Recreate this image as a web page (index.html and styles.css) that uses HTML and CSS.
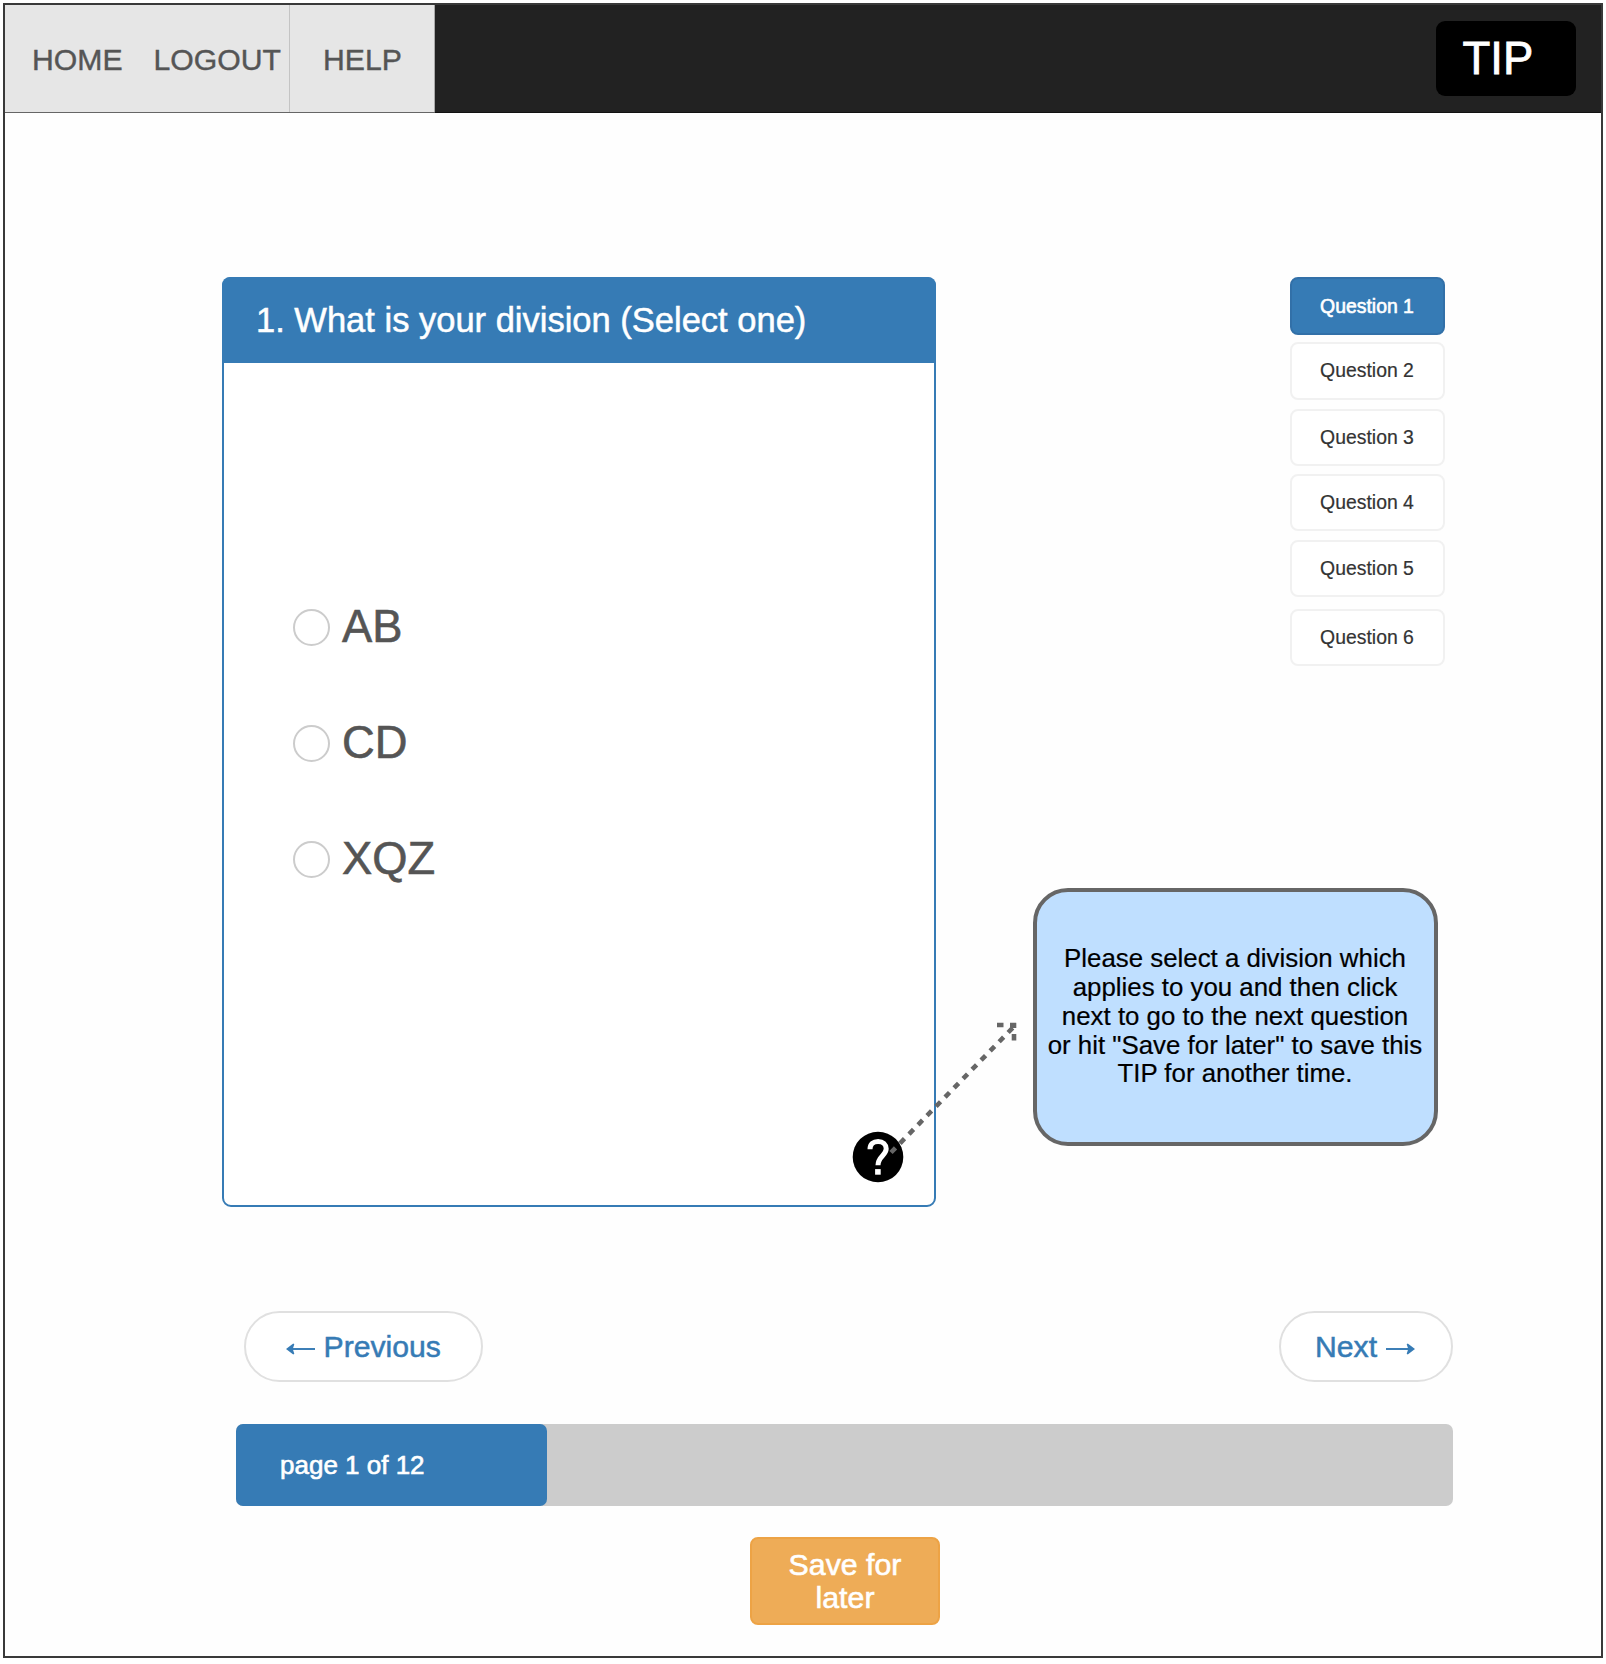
FILE: index.html
```
<!DOCTYPE html>
<html lang="en">
<head>
<meta charset="utf-8">
<title>TIP</title>
<link rel="stylesheet" href="styles.css">
</head>
<body>
<div class="frame">
  <header class="topbar">
    <nav class="tabs">
      <a class="tab tab-home">HOME</a>
      <a class="tab tab-logout">LOGOUT</a>
      <a class="tab tab-help">HELP</a>
    </nav>
    <div class="brand">TIP</div>
  </header>

  <main class="content">
    <div class="columns">
      <section class="panel">
        <h1 class="panel-title">1. What is your division (Select one)</h1>
        <div class="options">
          <label class="option"><span class="radio"></span><span class="option-text">AB</span></label>
          <label class="option"><span class="radio"></span><span class="option-text">CD</span></label>
          <label class="option"><span class="radio"></span><span class="option-text">XQZ</span></label>
        </div>
        <svg class="help" viewBox="0 0 52 52">
          <circle cx="26" cy="26" r="25.3" fill="#000"/>
          <path d="M18 18.3 C18 13.2 21.4 10.4 26.1 10.4 C31 10.4 34.2 13.6 34.2 17.8 C34.2 24.4 26 25.4 26 34.2" fill="none" stroke="#fff" stroke-width="5"/>
          <rect x="23.1" y="38.1" width="5.6" height="5.6" fill="#fff"/>
        </svg>
        <svg class="pointer" viewBox="0 0 140 140">
          <g fill="none" stroke="#666" stroke-width="4.6">
            <path d="M11 132.5 L135 5.5" stroke-dasharray="6.45 6.45"/>
            <path d="M117 5 H123.5 M130 5 H136.2 M134 3 V8 M134 14 V20.5"/>
          </g>
        </svg>
      </section>

      <aside class="side">
        <div class="questions">
          <a class="question active">Question 1</a>
          <a class="question">Question 2</a>
          <a class="question">Question 3</a>
          <a class="question">Question 4</a>
          <a class="question">Question 5</a>
          <a class="question">Question 6</a>
        </div>
        <div class="hint">
          <p class="hint-text">Please select a division which<br>applies to you and then click<br>next to go to the next question<br>or hit "Save for later" to save this<br>TIP for another time.</p>
        </div>
      </aside>
    </div>

    <div class="pager">
      <a class="pill pill-prev">
        <svg class="arrow" viewBox="0 0 30 14"><path d="M4 7H30" stroke="currentColor" stroke-width="2"/><path d="M0 7L7.5 1.2L8.6 2L7 7L8.6 12L7.5 12.8Z" fill="currentColor"/></svg>
        <span>Previous</span>
      </a>
      <a class="pill pill-next">
        <span>Next</span>
        <svg class="arrow" viewBox="0 0 30 14"><path d="M0 7H26" stroke="currentColor" stroke-width="2"/><path d="M30 7L22.5 1.2L21.4 2L23 7L21.4 12L22.5 12.8Z" fill="currentColor"/></svg>
      </a>
    </div>

    <div class="progress"><div class="progress-fill">page 1 of 12</div></div>
    <button class="save">Save for<br>later</button>
  </main>
</div>
</body>
</html>
```
FILE: styles.css
```
* { box-sizing: border-box; }
body {
  margin: 0;
  padding: 3px;
  background: #fff;
  font-family: "Liberation Sans", Arial, sans-serif;
}
.frame {
  width: 1600px;
  height: 1655px;
  border: 2px solid #393939;
  background: #fefefe;
}
.topbar {
  display: flex;
  justify-content: space-between;
  align-items: flex-start;
  height: 108px;
  padding-right: 25px;
  background: #222;
  border-bottom: 1px solid #111;
}
.tabs {
  display: flex;
  height: 108px;
  background: #e6e6e6;
  border-bottom: 1px solid #666;
}
.tab {
  display: flex;
  align-items: center;
  padding-top: 2px;
  font-size: 30.2px;
  color: #555;
  -webkit-text-stroke: 0.4px #555;
}
.tab-home { width: 141px; padding-left: 27px; }
.tab-logout { width: 144px; padding-left: 7.5px; border-right: 1px solid #c4c4c4; }
.tab-help { width: 145px; padding-left: 33px; border-right: 1px solid #aaa; }
.brand {
  width: 140px;
  height: 75px;
  margin-top: 16px;
  padding-left: 26.5px;
  border-radius: 9px;
  background: #000;
  color: #fff;
  font-size: 45.5px;
  line-height: 75px;
  -webkit-text-stroke: 0.8px #fff;
}
.content { padding: 164px 148.5px 0 217px; }
.columns {
  display: flex;
  justify-content: space-between;
}
.panel {
  position: relative;
  width: 713.5px;
  height: 930px;
  border: 2px solid #367bb5;
  border-radius: 9px;
  background: #fff;
}
.panel-title {
  margin: -2px -2px 0;
  height: 86px;
  padding-left: 34px;
  border-radius: 8px 8px 0 0;
  background: #367bb5;
  color: #fff;
  font-size: 34.5px;
  font-weight: 400;
  line-height: 87px;
  -webkit-text-stroke: 0.5px #fff;
}
.options {
  display: flex;
  flex-direction: column;
  gap: 56.2px;
  padding: 234px 0 0 69px;
}
.option {
  display: flex;
  align-items: center;
  gap: 12px;
  height: 60px;
}
.radio {
  width: 37px;
  height: 37px;
  border: 2px solid #ccc;
  border-radius: 50%;
}
.option-text {
  padding-bottom: 1px;
  color: #555;
  font-size: 45.3px;
  line-height: 58px;
  -webkit-text-stroke: 0.6px #555;
}
.help {
  position: absolute;
  left: 628.1px;
  top: 852px;
  width: 52px;
  height: 52px;
}
.pointer {
  position: absolute;
  left: 656px;
  top: 741px;
  width: 140px;
  height: 140px;
}
.side {
  display: flex;
  flex-direction: column;
  align-items: flex-end;
}
.questions {
  display: grid;
  grid-template-rows: 65px 66.5px 65px 66px 69px 58.5px;
  width: 155px;
  margin-right: 8px;
}
.question {
  display: flex;
  align-items: center;
  justify-content: center;
  height: 57.5px;
  border: 2px solid #f1f1f1;
  border-radius: 8px;
  background: #fff;
  color: #333;
  font-size: 19.4px;
  -webkit-text-stroke: 0.2px #333;
}
.question.active {
  height: 58px;
  border-color: #3270a8;
  background: #367bb5;
  color: #fff;
  -webkit-text-stroke: 0.6px #fff;
}
.hint {
  display: flex;
  align-items: center;
  justify-content: center;
  width: 405px;
  height: 258.5px;
  margin: 220.5px 15px 0 0;
  border: 4px solid #666;
  border-radius: 35px;
  background: #bfdfff;
}
.hint-text {
  margin: 0 0 1px;
  color: #000;
  font-size: 25.85px;
  line-height: 28.8px;
  text-align: center;
  white-space: nowrap;
  -webkit-text-stroke: 0.2px #000;
}
.pager {
  display: flex;
  justify-content: space-between;
  margin: 104px 0 0 22px;
}
.pill {
  display: flex;
  align-items: center;
  height: 71px;
  border: 2px solid #e0e0e0;
  border-radius: 36px;
  background: #fff;
  color: #367bb5;
  font-size: 30.2px;
  -webkit-text-stroke: 0.5px #367bb5;
}
.pill-prev { width: 239px; padding-left: 40px; gap: 8.5px; }
.pill-next { width: 174px; padding-left: 34.5px; gap: 9px; }
.arrow {
  width: 29px;
  height: 14px;
  margin-top: 5px;
}
.progress {
  height: 81.5px;
  margin: 42px 0 0 14px;
  border-radius: 7px;
  background: #ccc;
}
.progress-fill {
  width: 310.5px;
  height: 81.5px;
  padding-left: 44px;
  border-radius: 7px;
  background: #367bb5;
  color: #fff;
  font-size: 26px;
  line-height: 82px;
  -webkit-text-stroke: 0.6px #fff;
}
.save {
  display: block;
  width: 190px;
  height: 88px;
  margin: 31.5px 0 0 528px;
  padding: 0 0 1px;
  border: 2px solid #eda345;
  border-radius: 8px;
  background: #eeac57;
  color: #fff;
  font-family: inherit;
  font-size: 30.3px;
  line-height: 33px;
  -webkit-text-stroke: 0.6px #fff;
}
```
